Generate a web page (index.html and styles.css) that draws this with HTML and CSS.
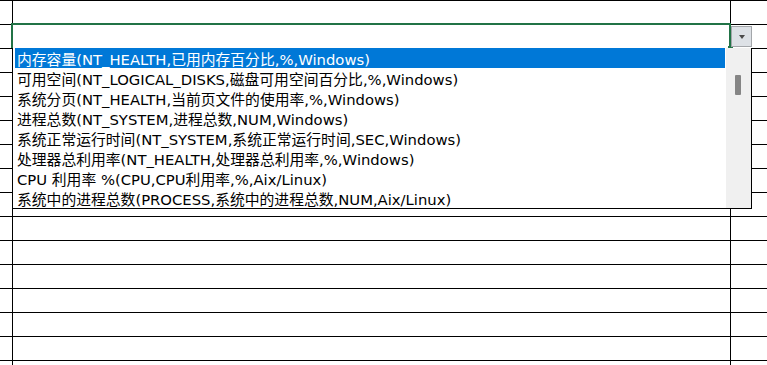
FILE: index.html
```html
<!DOCTYPE html>
<html lang="zh-CN">
<head>
<meta charset="utf-8">
<title>Sheet dropdown</title>
<link rel="stylesheet" href="styles.css">
</head>
<body>
<div class="sheet">
  <div class="grid">
    <div class="c c1"></div><div class="c c2"></div><div class="c c3"></div>
    <div class="c c1"></div><div class="c c2"></div><div class="c c3"></div>
    <div class="c c1"></div><div class="c c2"></div><div class="c c3"></div>
    <div class="c c1"></div><div class="c c2"></div><div class="c c3"></div>
    <div class="c c1"></div><div class="c c2"></div><div class="c c3"></div>
    <div class="c c1"></div><div class="c c2"></div><div class="c c3"></div>
    <div class="c c1"></div><div class="c c2"></div><div class="c c3"></div>
    <div class="c c1"></div><div class="c c2"></div><div class="c c3"></div>
    <div class="c c1"></div><div class="c c2"></div><div class="c c3"></div>
    <div class="c c1"></div><div class="c c2"></div><div class="c c3"></div>
    <div class="c c1"></div><div class="c c2"></div><div class="c c3"></div>
    <div class="c c1"></div><div class="c c2"></div><div class="c c3"></div>
    <div class="c c1"></div><div class="c c2"></div><div class="c c3"></div>
    <div class="c c1"></div><div class="c c2"></div><div class="c c3"></div>
    <div class="c c1"></div><div class="c c2"></div><div class="c c3"></div>
    <div class="c c1"></div><div class="c c2"></div><div class="c c3"></div>
  </div>

  <div class="active-cell"><span class="fill-handle"></span></div>
  <div class="dd-button"><span class="dd-arrow"></span></div>

  <div class="dd-list">
    <ul class="dd-items">
      <li class="dd-item selected">内存容量(NT_HEALTH,已用内存百分比,%,Windows)</li>
      <li class="dd-item">可用空间(NT_LOGICAL_DISKS,磁盘可用空间百分比,%,Windows)</li>
      <li class="dd-item">系统分页(NT_HEALTH,当前页文件的使用率,%,Windows)</li>
      <li class="dd-item">进程总数(NT_SYSTEM,进程总数,NUM,Windows)</li>
      <li class="dd-item">系统正常运行时间(NT_SYSTEM,系统正常运行时间,SEC,Windows)</li>
      <li class="dd-item">处理器总利用率(NT_HEALTH,处理器总利用率,%,Windows)</li>
      <li class="dd-item">CPU 利用率 %(CPU,CPU利用率,%,Aix/Linux)</li>
      <li class="dd-item">系统中的进程总数(PROCESS,系统中的进程总数,NUM,Aix/Linux)</li>
    </ul>
    <div class="dd-scroll"><span class="dd-thumb"></span></div>
  </div>
</div>
</body>
</html>
```

FILE: styles.css
```css
html, body {
  margin: 0;
  padding: 0;
  background: #ffffff;
  overflow: hidden;
}

.sheet {
  position: relative;
  width: 767px;
  height: 365px;
  overflow: hidden;
  font-family: "DejaVu Sans", "Noto Sans CJK SC", sans-serif;
}

.grid {
  display: grid;
  grid-template-columns: 13px 718px 1fr;
  grid-auto-rows: 24px;
}

.c {
  border-top: 1px solid #000;
  box-sizing: border-box;
}

.c1, .c2 {
  border-right: 1px solid #000;
}

.active-cell {
  position: absolute;
  left: 11px;
  top: 23px;
  width: 716px;
  height: 23px;
  border: 2px solid #217346;
  border-bottom: none;
}

.fill-handle {
  position: absolute;
  right: -4px;
  bottom: -2px;
  width: 5px;
  height: 4px;
  background: #217346;
}

.dd-button {
  position: absolute;
  left: 731px;
  top: 26px;
  width: 19px;
  height: 19px;
  background: #dde1e6;
  border: 1px solid #a3a6aa;
  display: flex;
  align-items: center;
  justify-content: center;
}

.dd-arrow {
  width: 0;
  height: 0;
  border-left: 3.5px solid transparent;
  border-right: 3.5px solid transparent;
  border-top: 4px solid #4a4a4a;
  margin-top: 1px;
}

.dd-list {
  position: absolute;
  left: 12px;
  top: 48px;
  width: 738px;
  height: 160px;
  background: #fff;
  border: 1px solid #000;
  border-top: none;
  display: flex;
}

.dd-items {
  list-style: none;
  margin: 0;
  padding: 0 1px 0 2px;
  flex: 1;
}

.dd-item {
  height: 20px;
  box-sizing: border-box;
  padding-top: 2px;
  line-height: 20px;
  padding-left: 2px;
  font-size: 14.8px;
  color: #000;
  white-space: nowrap;
}

.dd-item.selected {
  background: #0078d7;
  color: #fff;
}

.dd-scroll {
  width: 25px;
  background: #f0f0f0;
  position: relative;
}

.dd-thumb {
  position: absolute;
  left: 9px;
  top: 27px;
  width: 6px;
  height: 20px;
  background: #858585;
  border-radius: 1px;
}
```
